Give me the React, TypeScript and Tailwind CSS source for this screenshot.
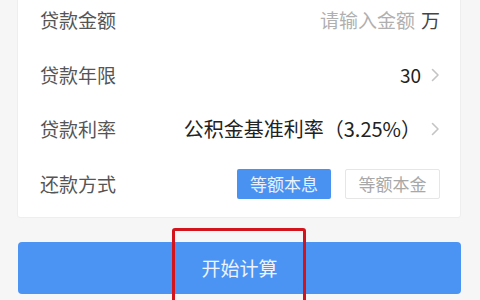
import React from "react";

function Chevron() {
  return (
    <svg width="9" height="14" viewBox="0 0 9 14" className="ml-[10px] shrink-0">
      <path d="M1.5 1.5 L7 7 L1.5 12.5" fill="none" stroke="#c4c4c4" strokeWidth="1.6" strokeLinecap="round" strokeLinejoin="round" />
    </svg>
  );
}

export default function App() {
  const font = { fontFamily: '"Noto Sans CJK SC", "Noto Sans", sans-serif' };
  return (
    <div className="relative w-[480px] h-[300px] overflow-hidden bg-[#f6f6f7]" style={font}>
      <div className="ml-[17px] w-[444px] -mt-[8px] bg-white border border-[#eeeeee] rounded-[3px] pl-[22px] pr-[20px] pb-[6px]">
        <div className="h-[54.5px] flex items-center justify-between">
          <span className="text-[19px] text-[#555555]">贷款金额</span>
          <span className="text-[19px]">
            <span className="text-[#b0b0b0]">请输入金额</span>
            <span className="text-[#444444] ml-[6px]">万</span>
          </span>
        </div>
        <div className="h-[54.5px] flex items-center justify-between">
          <span className="text-[19px] text-[#555555]">贷款年限</span>
          <span className="flex items-center">
            <span className="text-[19px] text-[#222222]">30</span>
            <Chevron />
          </span>
        </div>
        <div className="h-[54.5px] flex items-center justify-between">
          <span className="text-[19px] text-[#555555]">贷款利率</span>
          <span className="flex items-center">
            <span className="text-[20px] text-[#222222]">公积金基准利率（3.25%）</span>
            <Chevron />
          </span>
        </div>
        <div className="h-[54.5px] flex items-center justify-between">
          <span className="text-[19px] text-[#555555]">还款方式</span>
          <div className="flex items-center gap-[14px]">
            <div className="w-[94px] h-[30px] flex items-center justify-center rounded-[2px] bg-[#4a92f2] text-[17px] text-[#e9f1ff]">等额本息</div>
            <div className="w-[95px] h-[30px] flex items-center justify-center rounded-[2px] border border-[#e6e6e6] text-[17px] text-[#a8a8a8]">等额本金</div>
          </div>
        </div>
      </div>
      <div className="ml-[18px] w-[443px] mt-[24px] h-[52px] rounded-[4px] bg-[#4b94f4] flex items-center justify-center text-[19px] text-[#eef4ff]">
        开始计算
      </div>
      <div className="absolute left-[172px] top-[228px] w-[134px] h-[90px] border-[3px] border-[#d3141c] rounded-[3px]" />
    </div>
  );
}
